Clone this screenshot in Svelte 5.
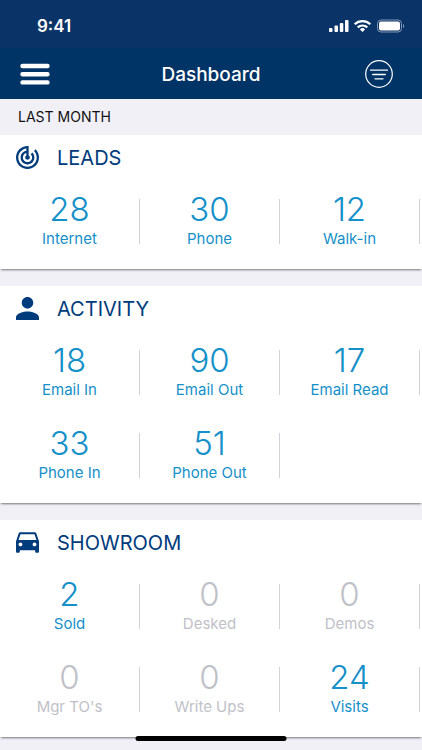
<script lang="ts">
  type Stat = { label: string; value: number };
  type Icon = { viewBox: string; path: string };
  type Section = { title: string; icon: string; stats: Stat[] };

  const icons: Record<string, Icon> = {
    leads: {
      viewBox: '2 2 20 20',
      path: 'M19.07 4.93l-1.41 1.41C19.1 7.79 20 9.79 20 12c0 4.42-3.58 8-8 8s-8-3.58-8-8c0-4.08 3.05-7.44 7-7.93v2.02C8.16 6.57 6 9.03 6 12c0 3.31 2.69 6 6 6s6-2.69 6-6c0-1.66-.67-3.16-1.76-4.24l-1.41 1.41C15.55 9.9 16 10.9 16 12c0 2.21-1.79 4-4 4s-4-1.79-4-4c0-1.86 1.28-3.41 3-3.86v2.14c-.6.35-1 .98-1 1.72 0 1.1.9 2 2 2s2-.9 2-2c0-.74-.4-1.38-1-1.72V2h-1C6.48 2 2 6.48 2 12s4.48 10 10 10 10-4.48 10-10c0-2.76-1.12-5.26-2.93-7.07z',
    },
    activity: {
      viewBox: '4 4 16 16',
      path: 'M12 12c2.21 0 4-1.79 4-4s-1.79-4-4-4-4 1.79-4 4 1.79 4 4 4zm0 2c-2.67 0-8 1.34-8 4v2h16v-2c0-2.66-5.33-4-8-4z',
    },
    showroom: {
      viewBox: '3 3 18 18',
      path: 'M18.92 5.01C18.72 4.42 18.16 4 17.5 4h-11c-.66 0-1.21.42-1.42 1.01L3 11v8c0 .55.45 1 1 1h1c.55 0 1-.45 1-1v-1h12v1c0 .55.45 1 1 1h1c.55 0 1-.45 1-1v-8l-2.08-5.99zM6.5 15c-.83 0-1.5-.67-1.5-1.5S5.67 12 6.5 12s1.5.67 1.5 1.5S7.33 15 6.5 15zm11 0c-.83 0-1.5-.67-1.5-1.5s.67-1.5 1.5-1.5 1.5.67 1.5 1.5-.67 1.5-1.5 1.5zM5 10l1.5-4.5h11L19 10H5z',
    },
  };

  const sections: Section[] = [
    {
      title: 'LEADS',
      icon: 'leads',
      stats: [
        { label: 'Internet', value: 28 },
        { label: 'Phone', value: 30 },
        { label: 'Walk-in', value: 12 },
      ],
    },
    {
      title: 'ACTIVITY',
      icon: 'activity',
      stats: [
        { label: 'Email In', value: 18 },
        { label: 'Email Out', value: 90 },
        { label: 'Email Read', value: 17 },
        { label: 'Phone In', value: 33 },
        { label: 'Phone Out', value: 51 },
      ],
    },
    {
      title: 'SHOWROOM',
      icon: 'showroom',
      stats: [
        { label: 'Sold', value: 2 },
        { label: 'Desked', value: 0 },
        { label: 'Demos', value: 0 },
        { label: "Mgr TO's", value: 0 },
        { label: 'Write Ups', value: 0 },
        { label: 'Visits', value: 24 },
      ],
    },
  ];
</script>

<div class="screen">
  <div class="status-bar">
    <span class="time">9:41</span>
    <svg class="status-icons" viewBox="0 0 76 14" width="76" height="14" aria-hidden="true">
      <g fill="#fff">
        <rect x="0" y="9" width="3.5" height="4" rx="1" />
        <rect x="5.5" y="6.5" width="3.5" height="6.5" rx="1" />
        <rect x="10.8" y="4" width="3.5" height="9" rx="1" />
        <rect x="16" y="1" width="3.5" height="12" rx="1" />
        <path d="M33.5 13l-2.6-2.6a3.7 3.7 0 0 1 5.200 0z" />
      </g>
      <g fill="none" stroke="#fff" stroke-width="2.2">
        <path d="M25.7 5.200a11.300 11.300 0 0 1 15.600 0" />
        <path d="M28.700 8.400a7 7 0 0 1 9.600 0" />
      </g>
      <rect x="48.5" y="1" width="24" height="12" rx="3.5" fill="none" stroke="#8296b5" />
      <rect x="50" y="2.5" width="21" height="9" rx="2" fill="#fff" />
      <path d="M74 5c1.6.5 1.6 3.5 0 4z" fill="#8296b5" />
    </svg>
  </div>

  <header>
    <button class="menu" aria-label="Menu">
      <svg viewBox="0 0 30 22" width="30" height="22">
        <path d="M2.5 3h25M2.5 11.2h25M2.5 19.4h25" stroke="#fff" stroke-width="4.4" stroke-linecap="round" />
      </svg>
    </button>
    <h1>Dashboard</h1>
    <button class="filter" aria-label="Filter">
      <svg viewBox="0 0 28 28" width="28" height="28" fill="none" stroke="#fff">
        <circle cx="14" cy="14" r="13.3" stroke-width="1.2" />
        <path d="M5.5 10.2h17M7.700 14.500h12.600M10 18.800h8" stroke-width="1.3" stroke-linecap="round" />
      </svg>
    </button>
  </header>

  <main>
    <p class="period">LAST MONTH</p>
    {#each sections as section}
      <section class="card">
        <h2>
          <svg viewBox={icons[section.icon].viewBox} width="23" height="23" aria-hidden="true">
            <path d={icons[section.icon].path} fill="currentColor" />
          </svg>
          {section.title}
        </h2>
        <div class="stats">
          {#each section.stats as stat}
            <div class="stat" class:empty={stat.value === 0}>
              <span class="value">{stat.value}</span>
              <span class="label">{stat.label}</span>
            </div>
          {/each}
        </div>
      </section>
    {/each}
  </main>

  <div class="home-indicator"></div>
</div>

<style>
  :global(body) {
    margin: 0;
    background: #f1f0f7;
  }

  .screen {
    font-family: Inter, 'Liberation Sans', sans-serif;
    color: #003b7c;
  }

  .status-bar {
    display: flex;
    justify-content: space-between;
    align-items: center;
    height: 48px;
    padding: 4px 17px 0 37px;
    box-sizing: border-box;
    background: #0a3468;
    color: #fff;
  }

  .time {
    font-size: 17px;
    font-weight: 600;
  }

  header {
    display: grid;
    grid-template-columns: 48px 1fr 48px;
    align-items: center;
    height: 51px;
    padding: 0 20px;
    background: #003366;
    color: #fff;
  }

  button {
    display: flex;
    padding: 0;
    border: 0;
    background: none;
  }

  .filter {
    justify-self: end;
    margin-right: 9px;
  }

  h1 {
    margin: 0;
    padding-top: 2px;
    font-size: 19px;
    font-weight: 500;
    text-align: center;
  }

  .period {
    margin: 0;
    padding: 0 18px;
    font-size: 14px;
    line-height: 36px;
    color: #111;
  }

  .card {
    padding-bottom: 6px;
    margin-bottom: 17px;
    background: #fff;
    box-shadow: 0 2px 2px -1px #77757f;
  }

  h2 {
    display: flex;
    align-items: center;
    gap: 18px;
    height: 45px;
    margin: 0;
    padding-left: 16px;
    font-size: 20px;
    font-weight: 400;
  }

  .stats {
    display: grid;
    grid-template-columns: repeat(3, 1fr);
    padding-right: 2px;
  }

  .stat {
    display: flex;
    flex-direction: column;
    align-items: center;
    height: 45px;
    margin: 19px 0;
    border-right: 1px solid #d2d2d6;
    color: #1590c9;
  }

  .stat.empty {
    color: #bfc1c8;
  }

  .value {
    margin-top: -10px;
    font-size: 33px;
    font-weight: 300;
    line-height: 40px;
  }

  .label {
    font-size: 15px;
    line-height: 20px;
  }

  .home-indicator {
    position: fixed;
    bottom: 9px;
    left: 50%;
    width: 151px;
    height: 5px;
    border-radius: 3px;
    background: #000;
    transform: translateX(-50%);
  }
</style>
